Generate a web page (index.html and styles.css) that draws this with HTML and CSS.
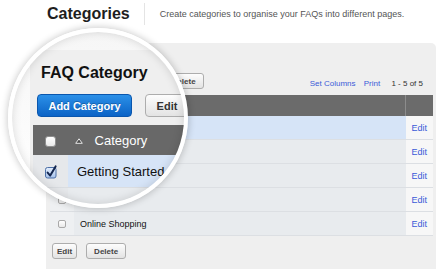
FILE: index.html
```html
<!DOCTYPE html>
<html lang="en">
<head>
  <meta charset="UTF-8">
  <meta name="viewport" content="width=device-width, initial-scale=1.0">
  <title>Categories</title>
  <link rel="stylesheet" href="styles.css">
</head>
<body>
  <!-- Page header -->
  <div class="page-header">
    <h1>Categories</h1>
    <p class="intro">Create categories to organise your FAQs into different pages.</p>
  </div>

  <!-- Category list -->
  <div class="panel">
    <h2 class="panel-title">FAQ Category</h2>
    <div class="toolbar">
      <div class="actions">
        <button class="btn btn-primary">Add Category</button>
        <button class="btn">Edit</button>
        <button class="btn">Delete</button>
      </div>
      <div class="table-links">
        <a href="#">Set Columns</a>
        <a href="#">Print</a>
        <span class="count">1 - 5 of 5</span>
      </div>
    </div>

    <table class="grid">
      <thead>
        <tr>
          <th class="col-check"><span class="check"></span></th>
          <th class="col-name">Category</th>
          <th class="col-edit"></th>
        </tr>
      </thead>
      <tbody>
        <tr class="selected">
          <td class="col-check"><span class="check"></span></td>
          <td class="col-name">Getting Started</td>
          <td class="col-edit"><a href="#">Edit</a></td>
        </tr>
        <tr>
          <td class="col-check"><span class="check"></span></td>
          <td class="col-name">Payments</td>
          <td class="col-edit"><a href="#">Edit</a></td>
        </tr>
        <tr>
          <td class="col-check"><span class="check"></span></td>
          <td class="col-name">Delivery</td>
          <td class="col-edit"><a href="#">Edit</a></td>
        </tr>
        <tr>
          <td class="col-check"><span class="check"></span></td>
          <td class="col-name">Login Help</td>
          <td class="col-edit"><a href="#">Edit</a></td>
        </tr>
        <tr>
          <td class="col-check"><span class="check"></span></td>
          <td class="col-name">Online Shopping</td>
          <td class="col-edit"><a href="#">Edit</a></td>
        </tr>
      </tbody>
    </table>

    <div class="footer-actions">
      <button class="btn btn-edit">Edit</button>
      <button class="btn">Delete</button>
    </div>
  </div>

  <!-- Magnifier over the top-left corner -->
  <div class="lens">
    <div class="lens-panel">
      <h2 class="lens-title">FAQ Category</h2>
      <div class="lens-actions">
        <button class="btn btn-primary lens-add">Add Category</button>
        <button class="btn lens-edit">Edit</button>
      </div>
      <table class="lens-grid">
        <thead>
          <tr>
            <th class="col-check"><span class="check"></span></th>
            <th class="col-name">
              <svg class="sort" width="8" height="6" viewBox="0 0 8 6"><path d="M0.7 5.3 L4 0.8 L7.3 5.3 Z" fill="#4a4a4a" stroke="#e6e6e6" stroke-width="1"/></svg>
              Category
            </th>
          </tr>
        </thead>
        <tbody>
          <tr class="selected">
            <td class="col-check">
              <svg width="14" height="14" viewBox="0 0 14 14">
                <defs>
                  <linearGradient id="boxFill" x1="0" y1="0" x2="0" y2="1">
                    <stop offset="0" stop-color="#e4eefc"/>
                    <stop offset="1" stop-color="#a6c2ec"/>
                  </linearGradient>
                </defs>
                <rect x="1.5" y="2.5" width="10.5" height="10.5" rx="2" fill="url(#boxFill)" stroke="#4d6fa6"/>
                <path d="M3.6 7.6 L6.2 10.6 L11.6 1.4" fill="none" stroke="#14264f" stroke-width="2" stroke-linecap="round" stroke-linejoin="round"/>
              </svg>
            </td>
            <td class="col-name">Getting Started</td>
          </tr>
          <tr>
            <td class="col-check"><span class="check"></span></td>
            <td class="col-name"></td>
          </tr>
        </tbody>
      </table>
    </div>
  </div>
</body>
</html>
```

FILE: styles.css
```css
/* Page */
body {
  font-family: "Liberation Sans", Arial, sans-serif;
  margin: 0;
  padding: 0;
  background-color: #fff;
  color: #333;
  width: 438px;
  height: 269px;
  overflow: hidden;
  position: relative;
}

.page-header {
  display: flex;
  align-items: center;
  height: 22px;
  padding: 3px 0 0 47px;
}

h1 {
  margin: 0 14px 0 0;
  font-size: 16px;
  line-height: 22px;
  color: #1e1e1e;
}

.intro {
  margin: 0;
  padding-left: 15px;
  border-left: 1px solid #e4e4e4;
  font-size: 9px;
  line-height: 22px;
  color: #555;
}

/* Panel */
.panel {
  margin: 18px 2px 0 46px;
  padding: 8px 3px 0 4px;
  height: 230px;
  background-color: #efefef;
  border-radius: 5px 5px 0 0;
}

.panel-title {
  margin: 0 0 7px 6px;
  font-size: 11px;
  line-height: 15px;
  color: #111;
}

.toolbar {
  display: flex;
  justify-content: space-between;
  align-items: flex-end;
  height: 16px;
  margin-bottom: 6px;
}

.actions,
.footer-actions {
  display: flex;
  gap: 6px;
  margin-left: 2px;
}

.btn {
  height: 16px;
  padding: 0 7px;
  font-family: inherit;
  font-size: 8px;
  font-weight: bold;
  color: #444;
  background: linear-gradient(#fdfdfd, #e3e3e3);
  border: 1px solid #adadad;
  border-radius: 3px;
}

.btn-primary {
  color: #fff;
  background: linear-gradient(#2b90e8, #0b63c6);
  border-color: #0a56ad;
}

.table-links {
  padding-right: 10px;
  font-size: 8px;
  line-height: 10px;
}

.table-links a {
  margin-right: 6px;
  color: #3a5bd8;
  text-decoration: none;
}

.table-links a + a {
  margin-right: 9px;
}

.count {
  color: #333;
}

/* Table */
.grid {
  width: 100%;
  border-collapse: collapse;
  font-size: 9px;
}

.grid th {
  height: 21px;
  padding: 0;
  background-color: #6b6b6b;
  color: #fff;
  font-weight: normal;
  text-align: left;
}

.grid th.col-name {
  padding-left: 22px;
}

.grid th.col-edit {
  border-left: 1px solid #8c8c8c;
}

.grid td {
  height: 23px;
  padding: 0;
  border-bottom: 1px solid #dcdfe3;
  background-color: #e8ebee;
  color: #111;
}

.grid .col-check {
  width: 24px;
  text-align: center;
}

.grid td.col-check {
  background-color: #eef0f2;
}

.grid td.col-name {
  padding-left: 6px;
}

.grid .col-edit {
  width: 27px;
  text-align: center;
}

.grid td.col-edit {
  background-color: #f7f7f7;
}

.grid td.col-edit a {
  color: #3a5bd8;
  text-decoration: none;
}

.grid .selected td.col-name {
  background-color: #d6e4f7;
}

.check {
  display: inline-block;
  width: 6px;
  height: 6px;
  vertical-align: middle;
  border: 1px solid #a9a9a9;
  border-radius: 2px;
  background: linear-gradient(#fff, #e9e9e9);
}

.footer-actions {
  margin-top: 7px;
  gap: 9px;
}

.footer-actions .btn-edit {
  padding: 0 4px;
}

/* Magnifier */
.lens {
  position: absolute;
  left: 8px;
  top: 28px;
  width: 172px;
  height: 172px;
  overflow: hidden;
  border: 4px solid #fff;
  border-radius: 50%;
  background: linear-gradient(#f6f6f6, #fff);
  box-shadow: 0 0 7px 1px rgba(0, 0, 0, 0.2);
}

.lens::after {
  content: "";
  position: absolute;
  top: 0;
  left: 0;
  right: 0;
  bottom: 0;
  border-radius: 50%;
  box-shadow: inset 0 0 10px rgba(0, 0, 0, 0.14);
}

.lens-panel {
  width: 300px;
  height: 300px;
  margin: 18px 0 0 18px;
  padding: 13px 0 0 3px;
  background-color: #efefef;
  border-radius: 4px 0 0 0;
}

.lens-title {
  margin: 0 0 12px 8px;
  font-size: 16px;
  line-height: 19px;
  color: #111;
}

.lens-actions {
  display: flex;
  gap: 13px;
  margin: 0 0 8px 4px;
}

.lens-actions .btn {
  height: 23px;
  padding: 0;
  font-size: 11px;
  border-radius: 4px;
}

.lens-add {
  width: 95px;
  text-shadow: 0 -1px 0 rgba(0, 0, 0, 0.25);
}

.lens-edit {
  width: 44px;
  color: #333;
}

.lens-grid {
  width: 300px;
  border-collapse: collapse;
  font-size: 13px;
}

.lens-grid th {
  height: 30px;
  padding: 0;
  background-color: #686868;
  color: #fff;
  font-weight: normal;
  text-align: left;
}

.lens-grid td {
  height: 32px;
  padding: 0;
  border-bottom: 1px solid #dadde1;
  background-color: #e8ebee;
  color: #111;
}

.lens-grid .col-check {
  width: 35px;
  text-align: center;
}

.lens-grid td.col-check {
  background-color: #e6e8eb;
}

.lens-grid .col-name {
  padding-left: 7px;
}

.lens-grid td.col-name {
  padding-left: 9px;
}

.lens-grid .selected td.col-name {
  background-color: #d6e4f7;
}

.lens-grid .check {
  width: 9px;
  height: 9px;
  border-color: #8e8e8e;
  border-radius: 3px;
}

.lens-grid svg {
  vertical-align: middle;
}

.sort {
  margin-right: 8px;
}
```
